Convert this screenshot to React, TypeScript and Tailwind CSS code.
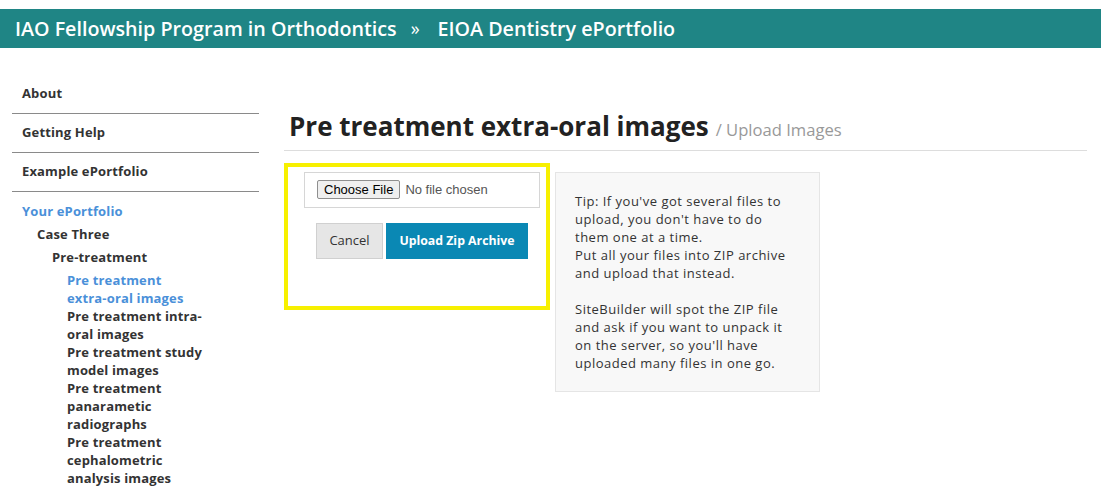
import React from 'react';

export default function App() {
  const topLinks = ['About', 'Getting Help', 'Example ePortfolio'];

  const subPages = [
    { lines: ['Pre treatment', 'extra-oral images'], active: true },
    { lines: ['Pre treatment intra-', 'oral images'], active: false },
    { lines: ['Pre treatment study', 'model images'], active: false },
    { lines: ['Pre treatment', 'panarametic', 'radiographs'], active: false },
    { lines: ['Pre treatment', 'cephalometric', 'analysis images'], active: false },
  ];

  const tipLines = [
    "Tip: If you've got several files to",
    "upload, you don't have to do",
    'them one at a time.',
    'Put all your files into ZIP archive',
    'and upload that instead.',
    '',
    'SiteBuilder will spot the ZIP file',
    'and ask if you want to unpack it',
    "on the server, so you'll have",
    'uploaded many files in one go.',
  ];

  return (
    <div className="min-h-[497px] bg-white font-['Open_Sans',sans-serif] text-[#333]">
      {/* Site header */}
      <div className="pt-[9px]">
        <div className="h-[39px] bg-[#1f8585] flex items-center pl-[15px] text-white text-[19.7px] font-semibold">
          <span>IAO Fellowship Program in Orthodontics</span>
          <span className="ml-[14px] mr-[18px] text-[18px] font-normal">»</span>
          <span>EIOA Dentistry ePortfolio</span>
        </div>
      </div>

      <div className="flex pt-[27px]">
        {/* Sidebar navigation */}
        <aside className="ml-[12px] w-[247px] shrink-0 text-[13px] font-bold tracking-[0.15px] text-[#333]">
          {topLinks.map((link) => (
            <div key={link} className="h-[39px] flex items-center px-[10px] border-b border-[#8a8a8a]">
              {link}
            </div>
          ))}
          <div className="pt-[8px] px-[10px] leading-[23px]">
            <div className="text-[#4a90d9]">Your ePortfolio</div>
            <div className="pl-[15px]">Case Three</div>
            <div className="pl-[30px]">Pre-treatment</div>
            <ul className="pl-[45px] pt-[2px] leading-[18px]">
              {subPages.map((page) => (
                <li key={page.lines.join(' ')} className={page.active ? 'text-[#4a90d9]' : 'text-[#333]'}>
                  {page.lines.map((line) => (
                    <div key={line}>{line}</div>
                  ))}
                </li>
              ))}
            </ul>
          </div>
        </aside>

        {/* Main content */}
        <main className="ml-[25px] w-[803px]">
          <div className="pl-[5px] pt-[35px] pb-[7px] border-b border-[#dddddd] flex items-baseline">
            <h1 className="text-[26px] font-bold text-[#222] leading-[32px]">Pre treatment extra-oral images</h1>
            <span className="ml-[7px] text-[16.6px] text-[#999]">/ Upload Images</span>
          </div>

          <div className="flex mt-[12px] gap-[5px]">
            {/* Upload form */}
            <div className="w-[266px] h-[147px] border-[4px] border-[#f7f000] pl-[16px] pr-[6px] pt-[5px]">
              <div className="h-[36px] border border-[#d6d6d6] flex items-center pl-[12px] font-['Liberation_Sans',sans-serif] text-[13px]">
                <span className="h-[19px] px-[6px] flex items-center bg-[#efefef] border border-[#8f8f8f] rounded-[2px] text-black">
                  Choose File
                </span>
                <span className="ml-[5px] text-[#555]">No file chosen</span>
              </div>
              <div className="flex gap-[3px] pl-[12px] mt-[15px]">
                <button className="w-[67px] h-[36px] bg-[#e6e6e6] border border-[#d0d0d0] text-[13px] text-[#333]">
                  Cancel
                </button>
                <button className="w-[142px] h-[36px] bg-[#0a88b4] text-white text-[12.3px] font-bold">
                  Upload Zip Archive
                </button>
              </div>
            </div>

            {/* Tip box */}
            <div className="mt-[9px] w-[265px] h-[220px] bg-[#f8f8f8] border border-[#e5e5e5] pl-[19px] pt-[19px] text-[13px] leading-[18px] tracking-[0.5px] text-[#333]">
              {tipLines.map((line, i) => (
                <div key={i} className="h-[18px] whitespace-nowrap">
                  {line}
                </div>
              ))}
            </div>
          </div>
        </main>
      </div>
    </div>
  );
}
